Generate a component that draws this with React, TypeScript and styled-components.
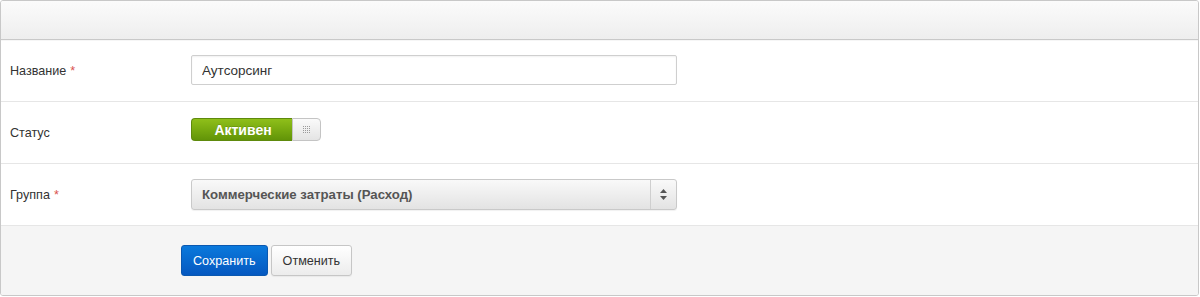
import React, { useState } from 'react';
import styled, { createGlobalStyle } from 'styled-components';

const GlobalStyle = createGlobalStyle`
  html, body {
    margin: 0;
    padding: 0;
    background: #fff;
  }
  body {
    font-family: 'Liberation Sans', Arial, sans-serif;
    font-size: 12px;
    color: #333;
  }
`;

const Panel = styled.div`
  width: 1199px;
  height: 296px;
  box-sizing: border-box;
  border: 1px solid #c8c8c8;
  border-radius: 3px;
  display: flex;
  flex-direction: column;
  overflow: hidden;
`;

const PanelHeader = styled.div`
  height: 38px;
  flex-shrink: 0;
  background: linear-gradient(to bottom, #fbfbfb 0%, #eeeeee 100%);
  border-bottom: 1px solid #c9c9c9;
  box-shadow: 0 1px 0 #f6f6f6;
`;

const Row = styled.div`
  display: flex;
  align-items: center;
  height: 61px;
  flex-shrink: 0;
  border-bottom: 1px solid #e6e6e6;
  padding-left: 9px;
`;

const Label = styled.label`
  width: 181px;
  font-size: 12.6px;
  color: #333;
`;

const Required = styled.span`
  color: #d9534f;
  margin-left: 4px;
`;

const TextInput = styled.input`
  box-sizing: border-box;
  width: 486px;
  height: 30px;
  margin-top: -1px;
  padding: 0 10px;
  border: 1px solid #cfcfcf;
  border-radius: 2px;
  box-shadow: inset 0 1px 2px rgba(0, 0, 0, 0.06);
  font-family: 'Liberation Sans', Arial, sans-serif;
  font-size: 13.5px;
  color: #333;
  outline: none;
`;

const Toggle = styled.button<{ $on: boolean }>`
  display: flex;
  width: 130px;
  height: 23px;
  margin-top: -6px;
  padding: 0;
  border: none;
  background: transparent;
  cursor: pointer;
`;

const ToggleTrack = styled.span`
  flex: 1;
  display: flex;
  align-items: center;
  justify-content: center;
  padding-left: 2px;
  background: linear-gradient(to bottom, #8fbf1a 0%, #76a80f 55%, #629408 100%);
  border: 1px solid #5e8a0c;
  border-right: none;
  border-radius: 4px 0 0 4px;
  color: #fff;
  font-family: 'Liberation Sans', Arial, sans-serif;
  font-weight: bold;
  font-size: 14px;
  text-shadow: 0 -1px 0 rgba(0, 0, 0, 0.15);
`;

const ToggleKnob = styled.span`
  width: 29px;
  display: flex;
  align-items: center;
  justify-content: center;
  background: linear-gradient(to bottom, #fafafa 0%, #e4e4e4 100%);
  border: 1px solid #c4c4c4;
  border-radius: 0 4px 4px 0;
  box-sizing: border-box;
`;

const Select = styled.div`
  display: flex;
  box-sizing: border-box;
  width: 486px;
  height: 31px;
  margin-top: -1px;
  border: 1px solid #c9c9c9;
  border-radius: 3px;
  background: linear-gradient(to bottom, #f9f9f9 0%, #e3e3e3 100%);
  box-shadow: 0 1px 1px rgba(0, 0, 0, 0.06);
  cursor: pointer;
`;

const SelectValue = styled.span`
  flex: 1;
  display: flex;
  align-items: center;
  padding-left: 10px;
  font-weight: bold;
  font-size: 13.2px;
  color: #555;
  border-right: 1px solid #cfcfcf;
`;

const SelectArrows = styled.span`
  width: 25px;
  display: flex;
  align-items: center;
  justify-content: center;
`;

const Footer = styled.div`
  flex: 1;
  background: #f5f5f5;
  display: flex;
  align-items: flex-start;
  gap: 3px;
  padding: 19px 0 0 180px;
`;

const Button = styled.button<{ $primary?: boolean }>`
  height: 31px;
  padding: 0 11px;
  border-radius: 3px;
  font-family: 'Liberation Sans', Arial, sans-serif;
  font-size: 12.6px;
  cursor: pointer;
  color: ${p => (p.$primary ? '#fff' : '#333')};
  border: 1px solid ${p => (p.$primary ? '#0a58b0' : '#c6c6c6')};
  background: ${p =>
    p.$primary
      ? 'linear-gradient(to bottom, #0a79dc 0%, #0558c0 100%)'
      : 'linear-gradient(to bottom, #ffffff 0%, #ececec 100%)'};
  box-shadow: ${p => (p.$primary ? 'none' : '0 1px 1px rgba(0,0,0,0.05)')};
`;

const Grip = () => (
  <svg width="8" height="8" viewBox="0 0 8 8">
    {[0, 1, 2, 3].map(r =>
      [0, 1, 2, 3].map(c => (
        <rect key={`${r}-${c}`} x={c * 2} y={r * 2} width="1" height="1" fill="#9a9a9a" />
      ))
    )}
  </svg>
);

const UpDown = () => (
  <svg width="7" height="11" viewBox="0 0 7 11">
    <path d="M3.5 0 L7 4 L0 4 Z" fill="#555" />
    <path d="M0 7 L7 7 L3.5 11 Z" fill="#555" />
  </svg>
);

export default function App() {
  const [name, setName] = useState('Аутсорсинг');
  const [active, setActive] = useState(true);

  return (
    <>
      <GlobalStyle />
      <Panel>
        <PanelHeader />
        <Row>
          <Label>
            Название<Required>*</Required>
          </Label>
          <TextInput value={name} onChange={e => setName(e.target.value)} />
        </Row>
        <Row>
          <Label>Статус</Label>
          <Toggle $on={active} onClick={() => setActive(!active)}>
            <ToggleTrack>{active ? 'Активен' : 'Неактивен'}</ToggleTrack>
            <ToggleKnob>
              <Grip />
            </ToggleKnob>
          </Toggle>
        </Row>
        <Row>
          <Label>
            Группа<Required>*</Required>
          </Label>
          <Select>
            <SelectValue>Коммерческие затраты (Расход)</SelectValue>
            <SelectArrows>
              <UpDown />
            </SelectArrows>
          </Select>
        </Row>
        <Footer>
          <Button $primary>Сохранить</Button>
          <Button>Отменить</Button>
        </Footer>
      </Panel>
    </>
  );
}
